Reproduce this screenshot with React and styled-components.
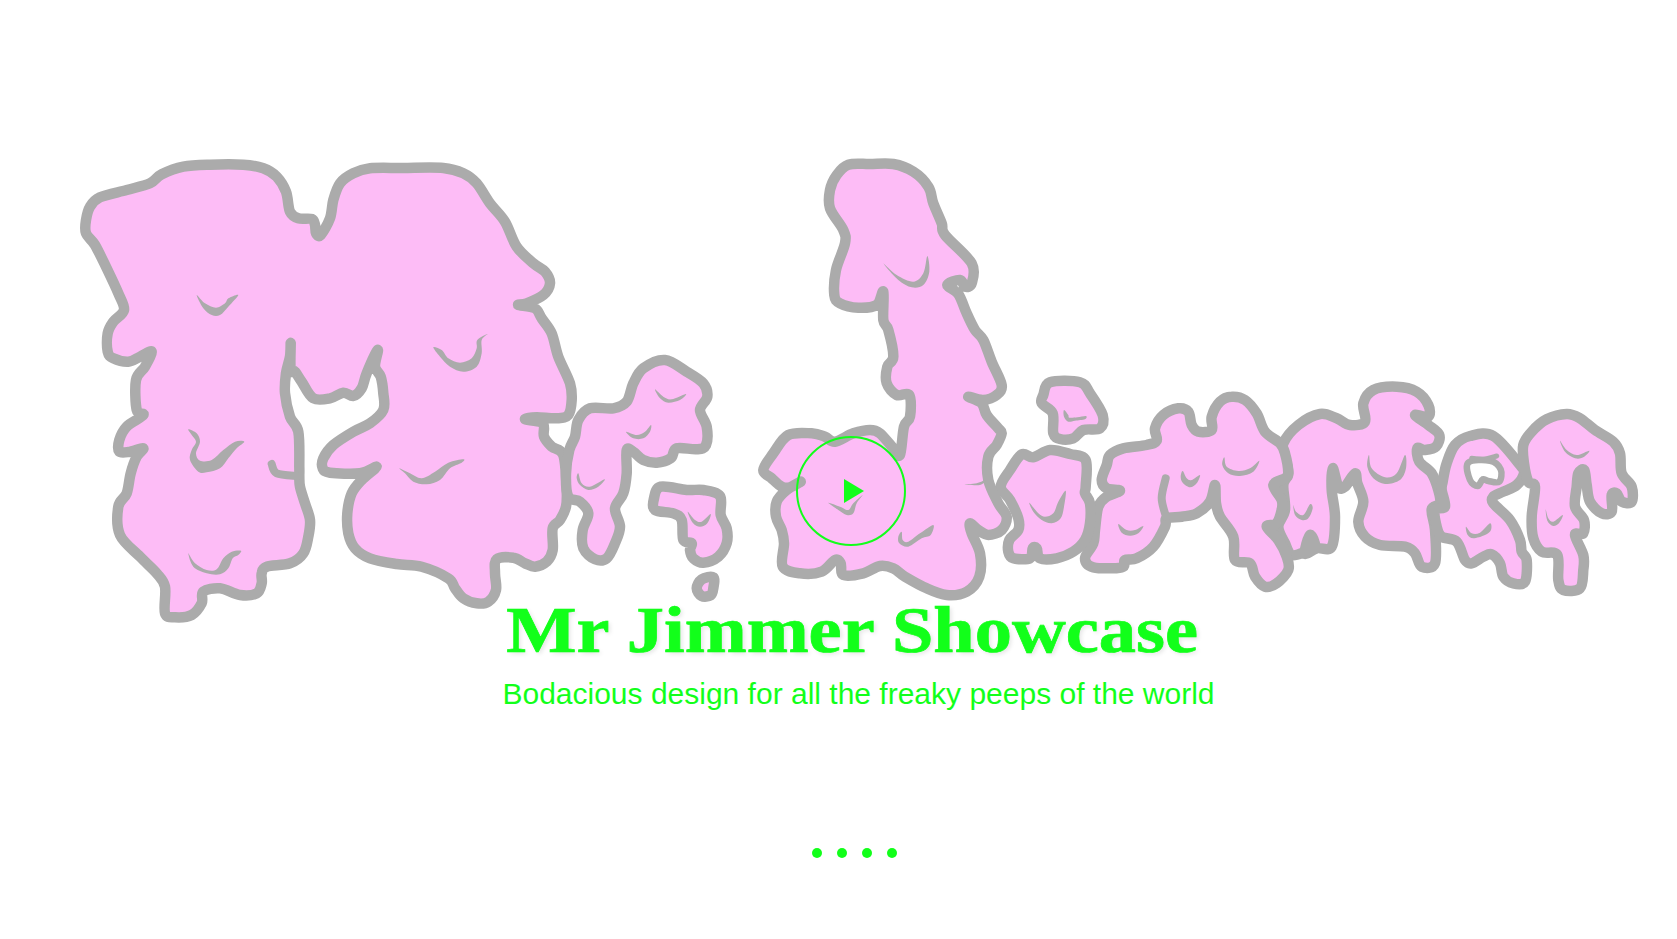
import React from "react";
import styled, { createGlobalStyle } from "styled-components";

const Global = createGlobalStyle`
  html, body { margin: 0; padding: 0; background: #fff; overflow: hidden; }
`;

const Page = styled.main`
  width: 1677px;
  height: 939px;
  display: flex;
  flex-direction: column;
  align-items: center;
  background: #fff;
`;
const Hero = styled.div`
  position: relative;
  width: 1677px;
  height: 594px;
  flex: none;
`;
const Logo = styled.svg`
  display: block;
  width: 1677px;
  height: 594px;
  overflow: visible;
`;
const Blob = styled.path`
  fill: ${(p) => (p.$hole ? "#fff" : "#fdbcf6")};
  stroke: #ababab;
  stroke-width: ${(p) => p.$w || 10.5}px;
  stroke-linejoin: round;
  stroke-linecap: round;
`;
const Spur = styled.path`
  fill: none;
  stroke: #ababab;
  stroke-width: ${(p) => p.$w || 8}px;
  stroke-linejoin: round;
  stroke-linecap: round;
`;
const Crease = styled.path`
  fill: #ababab;
  stroke: none;
`;
const PlayButton = styled.button`
  position: absolute;
  left: 796px;
  top: 436px;
  width: 110px;
  height: 110px;
  box-sizing: border-box;
  padding: 0;
  border: 2px solid #12ff1a;
  border-radius: 50%;
  background: transparent;
`;
const PlayGlyph = styled.span`
  position: absolute;
  left: 46px;
  top: 41px;
  width: 0;
  height: 0;
  border-style: solid;
  border-width: 12.5px 0 12.5px 20px;
  border-color: transparent transparent transparent #12ff1a;
`;
const Title = styled.h1`
  position: relative;
  margin: 0 0 0 27px;
  font-family: "Liberation Serif", "Times New Roman", serif;
  font-weight: 700;
  font-size: 65px;
  line-height: 72px;
  color: #12ff1a;
  -webkit-text-stroke: 0.7px #12ff1a;
  text-shadow: 2px 2px 4px rgba(0, 0, 0, 0.1);
  white-space: nowrap;
  transform: scaleX(1.145);
`;
const Subtitle = styled.p`
  margin: 10px 0 0 40px;
  font-family: "Liberation Sans", Arial, sans-serif;
  font-size: 30px;
  line-height: 36px;
  color: #12ff1a;
  white-space: nowrap;
`;
const Dots = styled.div`
  display: flex;
  gap: 15px;
  margin: 136px 0 0 31px;
`;
const Dot = styled.span`
  width: 10px;
  height: 10px;
  border-radius: 50%;
  background: #12ff1a;
`;

// Trace points are noted in crop coordinates; each group maps them to page space.
const at = (ox, oy, flat) => {
  const out = [];
  for (let i = 0; i < flat.length; i += 2) out.push([ox + flat[i] / 3, oy + flat[i + 1] / 3]);
  return out;
};
const f = (n) => n.toFixed(1);
const closed = (p) => {
  const n = p.length;
  let d = `M${f(p[0][0])} ${f(p[0][1])}`;
  for (let i = 0; i < n; i++) {
    const a = p[(i - 1 + n) % n], b = p[i], c = p[(i + 1) % n], e = p[(i + 2) % n];
    d += `C${f(b[0] + (c[0] - a[0]) / 6)} ${f(b[1] + (c[1] - a[1]) / 6)} ${f(c[0] - (e[0] - b[0]) / 6)} ${f(c[1] - (e[1] - b[1]) / 6)} ${f(c[0])} ${f(c[1])}`;
  }
  return d + "Z";
};
const open = (p) => {
  const n = p.length;
  let d = `M${f(p[0][0])} ${f(p[0][1])}`;
  for (let i = 0; i < n - 1; i++) {
    const a = p[Math.max(i - 1, 0)], b = p[i], c = p[i + 1], e = p[Math.min(i + 2, n - 1)];
    d += `C${f(b[0] + (c[0] - a[0]) / 6)} ${f(b[1] + (c[1] - a[1]) / 6)} ${f(c[0] - (e[0] - b[0]) / 6)} ${f(c[1] - (e[1] - b[1]) / 6)} ${f(c[0])} ${f(c[1])}`;
  }
  return d;
};

const A = [60, 140];
const B = [500, 140];
const C = [990, 370];
const D = [1300, 370];

const blobs = [
  // second m
  [D, [-50,220,-5,165,60,132,110,145,150,165,195,155,190,100,220,60,290,50,350,65,385,105,385,140,345,135,385,165,418,195,408,230,375,240,352,235,358,275,395,310,415,360,420,400,395,418,405,480,405,580,365,590,345,550,315,530,240,525,195,500,175,455,190,395,172,340,165,310,135,350,115,350,98,295,95,360,105,440,95,530,50,535,15,550,30,495,45,530,15,545,-25,555,-45,520,-65,470,-45,420,-50,345,-35,310,-45,260]],
  // first m
  [C, [285,565,310,592,395,592,405,570,440,565,490,530,525,470,530,445,575,440,620,430,660,395,675,345,678,400,690,440,730,500,735,570,780,580,795,620,825,650,860,640,895,600,890,560,865,510,830,470,860,460,875,420,875,390,850,345,885,325,895,310,885,250,870,220,825,185,800,130,765,90,725,80,690,95,665,140,665,180,625,185,605,165,595,125,565,115,520,135,495,175,500,212,470,225,400,235,360,255,350,285,335,330,350,355,390,362,350,380,325,410,315,480,310,520]],
  // e
  [D, [428,335,440,280,465,225,510,198,580,198,660,285,672,310,650,345,610,365,580,380,580,400,630,450,660,510,665,545,680,570,675,635,640,640,610,620,600,580,575,553,550,560,515,580,495,570,470,515,425,500,410,470,405,420,435,410,425,360]],
  // last r
  [D, [670,225,695,185,740,148,800,132,840,145,885,180,940,215,960,250,965,310,995,350,995,395,965,395,950,370,935,375,935,425,905,430,870,395,860,345,853,300,835,310,830,350,825,410,852,450,850,490,825,495,850,555,850,600,840,655,790,660,775,630,772,555,725,545,700,505,695,440,705,350,685,335,672,280]],
  // i stem
  [C, [95,253,130,262,180,240,240,252,287,270,287,350,285,370,300,400,300,460,285,510,250,545,200,565,150,565,140,535,128,535,120,565,70,565,55,545,58,510,85,480,85,445,60,390,32,350,60,300]],
  // i dot
  [C, [160,75,180,37,270,37,300,70,338,135,330,175,280,180,250,205,210,207,190,190,188,130,155,100]],
  // J
  [B, [1045,74,1110,72,1180,72,1240,95,1285,140,1300,190,1325,250,1335,285,1415,370,1415,430,1395,440,1380,420,1342,435,1375,462,1400,520,1425,570,1450,600,1475,665,1505,735,1490,765,1450,780,1405,770,1445,790,1460,825,1495,865,1505,880,1490,915,1465,950,1465,1020,1495,1090,1520,1130,1505,1170,1465,1185,1435,1170,1410,1150,1415,1180,1440,1240,1438,1310,1400,1355,1340,1365,1280,1345,1215,1310,1180,1285,1140,1278,1090,1300,1030,1305,1022,1270,1005,1260,965,1295,900,1300,848,1280,852,1210,845,1170,828,1130,830,1085,860,1050,902,1025,870,1042,845,1040,815,1015,790,990,820,940,865,885,935,880,975,890,1005,905,1060,880,1110,870,1140,880,1180,925,1200,945,1212,860,1230,830,1228,765,1190,765,1160,730,1162,680,1180,650,1165,570,1150,540,1150,455,1130,495,1075,503,1020,490,1003,465,1008,390,1035,310,1030,270,990,205,990,150,1010,105]],
  // big M
  [A, [120,172,200,150,270,130,305,103,370,80,450,74,550,74,610,85,650,110,678,155,690,215,715,235,755,237,765,255,768,280,782,285,810,235,820,180,840,130,880,100,930,85,1030,84,1150,84,1210,100,1250,130,1290,190,1335,245,1370,320,1420,370,1455,395,1470,430,1450,465,1400,490,1375,495,1425,505,1445,535,1475,580,1495,650,1530,730,1535,780,1525,825,1490,835,1430,832,1395,838,1448,850,1452,890,1475,920,1510,945,1520,1050,1518,1100,1500,1140,1478,1165,1478,1230,1460,1265,1425,1280,1395,1270,1360,1253,1310,1258,1305,1300,1308,1350,1285,1385,1250,1390,1210,1375,1185,1345,1165,1315,1085,1280,1010,1272,930,1255,885,1225,865,1180,862,1120,875,1060,905,1020,950,980,900,1000,810,998,788,985,790,955,820,915,880,875,930,850,970,810,970,760,962,710,945,680,953,630,920,700,905,745,880,768,850,758,810,775,760,775,725,725,705,695,692,690,692,610,690,650,678,700,675,760,690,830,715,875,718,980,718,1010,720,1040,735,1090,750,1140,745,1190,730,1240,690,1270,620,1280,605,1300,605,1330,590,1360,540,1365,480,1345,430,1355,425,1390,395,1425,345,1432,315,1420,315,1340,290,1300,240,1250,180,1185,175,1100,200,1060,212,1000,230,950,250,925,210,935,178,935,178,900,200,860,250,825,230,810,228,720,255,680,275,635,240,650,205,665,160,655,143,635,143,580,160,545,192,510,175,460,140,385,105,315,78,280,78,240,90,200]],
  // r
  [B, [225,890,235,840,270,805,340,805,380,785,400,730,430,685,495,660,560,695,610,730,622,770,600,810,620,860,618,915,590,928,530,925,512,955,470,968,430,960,400,935,380,930,380,1000,370,1060,345,1105,360,1160,345,1210,320,1255,285,1258,250,1225,248,1170,265,1120,240,1085,205,1070,198,1000,208,930]],
  // period
  [B, [482,1040,560,1050,610,1050,660,1068,662,1125,680,1165,680,1210,655,1250,610,1268,580,1255,570,1230,575,1210,550,1200,545,1140,520,1120,465,1110,462,1075]],
  // period drip
  [B, [605,1318,640,1312,640,1345,632,1366,605,1368,590,1345]],
];

const spurs = [
  [A, [635,972,650,1000,712,1008]],
  [C, [528,440,515,385,527,325]],
  [D, [515,265,550,268,590,258], 5],
];

const creases = [
  [A, [410,465,435,490,468,503,495,490,505,475,535,465,505,500,480,525,455,525,430,505]],
  [A, [385,868,410,880,420,905,408,940,420,962,455,960,490,930,525,905,553,905,530,925,505,955,480,985,440,997,415,995,390,960,395,930,408,905,395,885]],
  [A, [385,1240,405,1270,440,1290,470,1288,490,1255,515,1235,543,1232,535,1245,518,1255,505,1285,480,1303,440,1300,400,1280]],
  [A, [1120,622,1145,630,1165,655,1200,668,1235,655,1250,625,1252,600,1283,582,1265,600,1265,640,1250,680,1210,695,1170,680,1140,650]],
  [A, [1018,985,1050,1000,1085,1015,1125,995,1165,968,1210,958,1205,968,1170,985,1140,1020,1100,1033,1060,1025,1035,1000]],
  [B, [465,748,490,770,515,778,558,762,540,780,505,788,480,775]],
  [B, [378,875,410,885,435,875,453,855,450,875,430,895,400,895]],
  [B, [235,1000,245,1030,270,1040,314,1018,295,1040,265,1050,240,1035,230,1015]],
  [B, [563,1115,585,1140,605,1145,632,1122,622,1150,600,1160,578,1148]],
  [B, [1150,370,1190,405,1240,425,1270,400,1282,348,1288,395,1270,435,1235,442,1195,420]],
  [B, [985,1088,1020,1100,1045,1110,1060,1090,1088,1065,1070,1090,1060,1120,1040,1125,1015,1110]],
  [B, [1205,1175,1208,1200,1225,1205,1260,1180,1300,1155,1292,1185,1265,1195,1225,1220,1198,1210,1195,1190]],
  [B, [1392,1033,1430,1030,1460,1018,1440,1035]],
  [C, [222,120,235,135,238,143,262,142,288,138,285,148,255,152,235,155,222,140]],
  [C, [118,398,145,430,165,440,190,430,205,395,227,362,222,410,212,445,185,460,155,450,130,425]],
  [C, [385,462,410,480,435,480,460,468,445,490,420,497,395,488]],
  [C, [578,303,590,325,605,330,630,315,620,340,600,352,578,338,572,320]],
  [C, [703,262,710,290,745,303,780,295,808,272,790,305,750,318,715,310,697,285]],
  [C, [910,405,918,425,940,435,960,403,968,415,955,445,935,450,915,435]],
  [D, [207,255,215,295,255,322,290,310,315,255,318,295,300,330,255,342,220,325,202,290]],
  [D, [498,470,515,490,540,488,570,460,573,480,555,495,520,505,503,495]],
  [D, [780,212,800,240,830,255,868,242,850,262,825,265,795,245]],
  [D, [737,418,745,445,760,455,788,435,778,458,760,468,742,452]],
];

const hole = at(D[0], D[1], [505,278,570,272,602,298,598,335,565,333,548,328,533,348,510,330]);

export default function App() {
  return (
    <Page>
      <Global />
      <Hero>
        <Logo viewBox="0 0 1677 594" aria-label="Mr. Jimmer logo">
          {blobs.map(([o, pts], i) => (
            <Blob key={i} d={closed(at(o[0], o[1], pts))} />
          ))}
          <Blob $hole $w={6.5} d={closed(hole)} />
          {spurs.map(([o, pts, w], i) => (
            <Spur key={i} $w={w} d={open(at(o[0], o[1], pts))} />
          ))}
          {creases.map(([o, pts], i) => (
            <Crease key={i} d={closed(at(o[0], o[1], pts))} />
          ))}
        </Logo>
        <PlayButton aria-label="Play">
          <PlayGlyph />
        </PlayButton>
      </Hero>
      <Title>Mr Jimmer Showcase</Title>
      <Subtitle>Bodacious design for all the freaky peeps of the world</Subtitle>
      <Dots>
        <Dot />
        <Dot />
        <Dot />
        <Dot />
      </Dots>
    </Page>
  );
}
